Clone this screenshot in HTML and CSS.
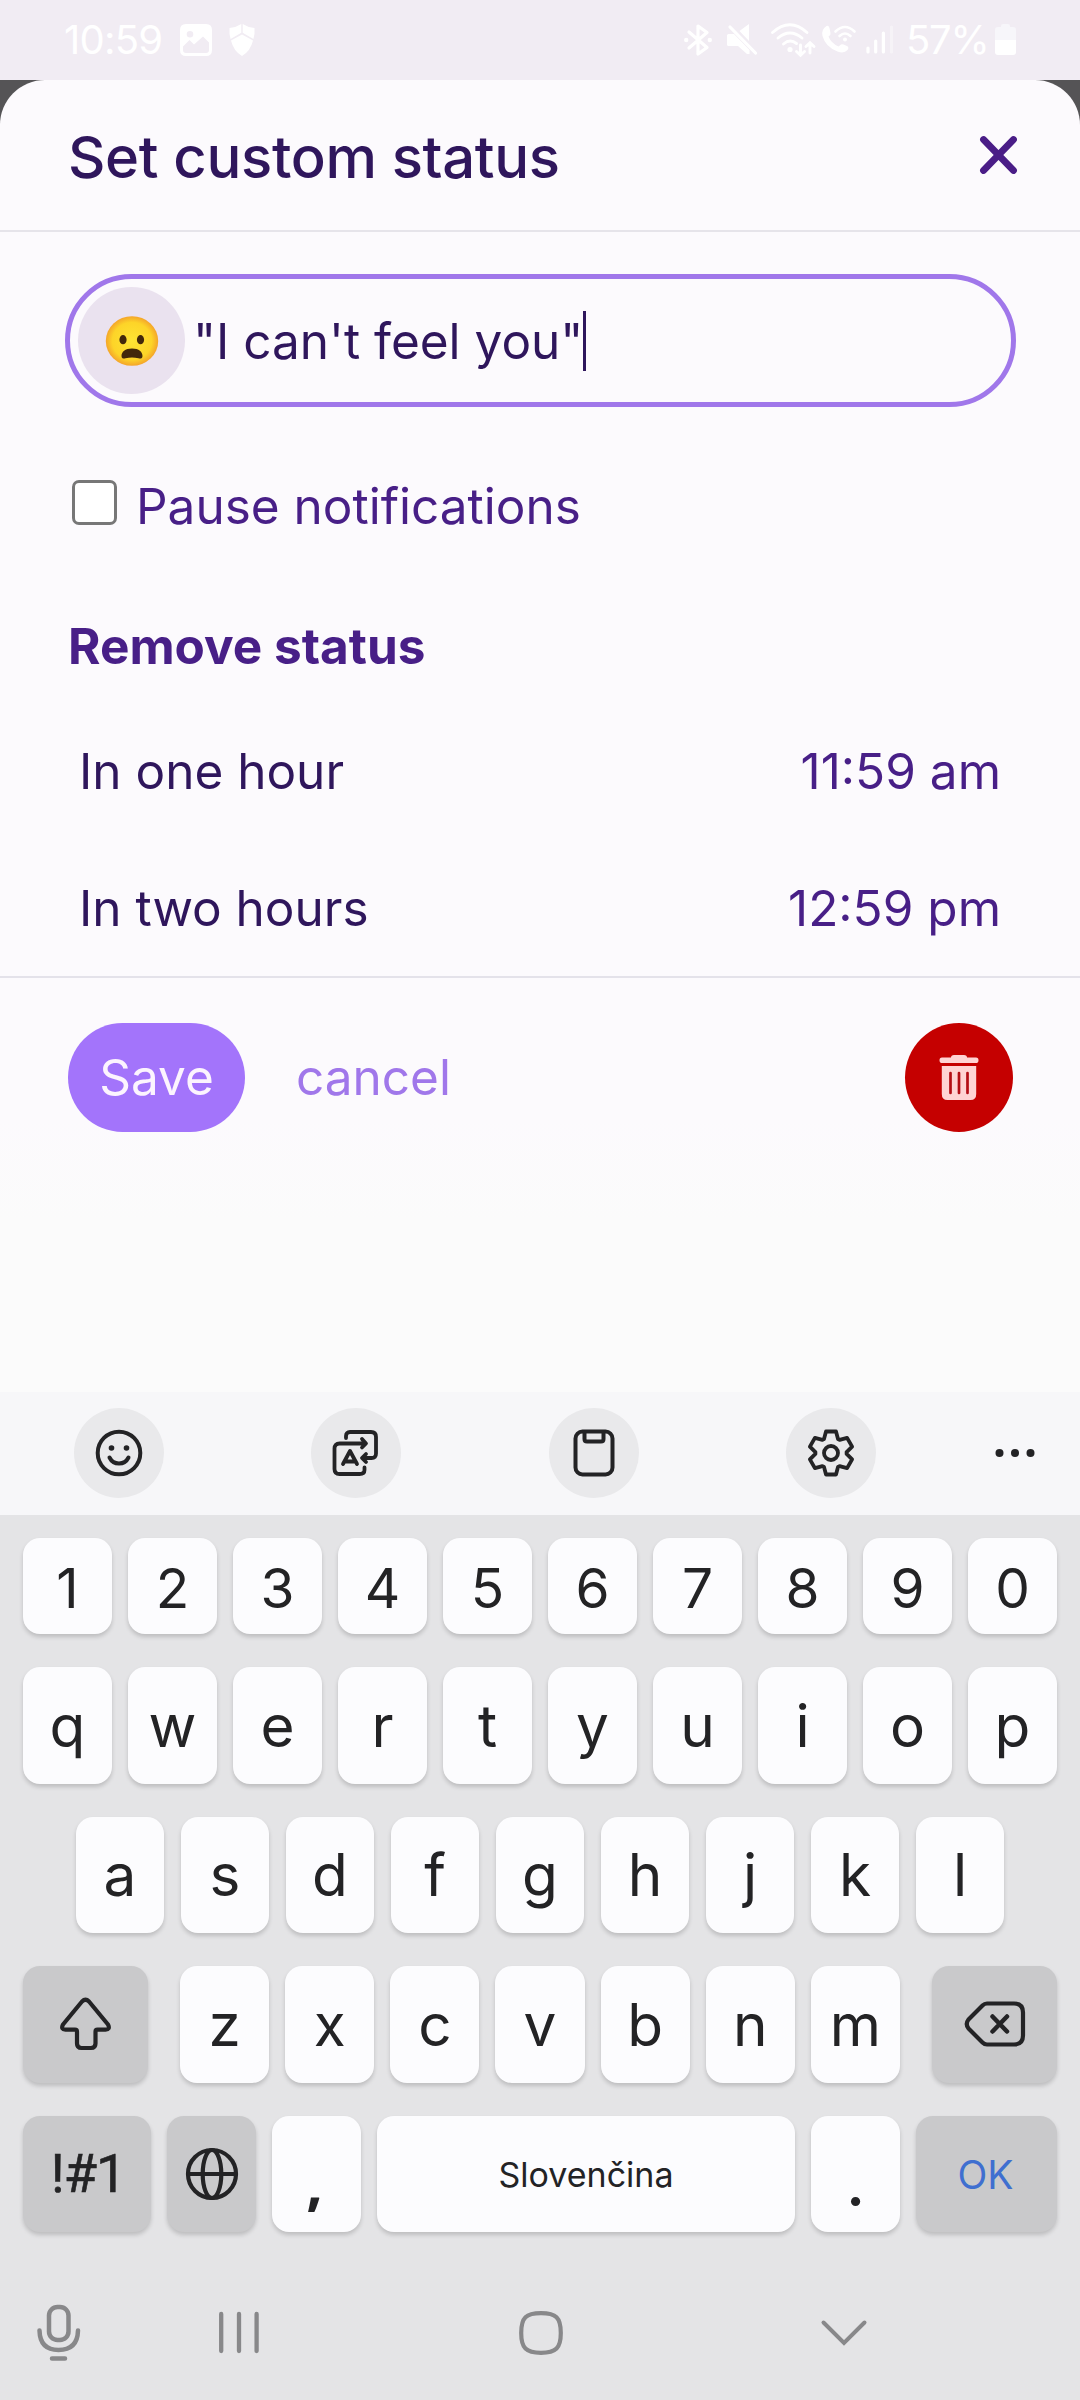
FILE: index.html
```html
<!DOCTYPE html>
<html lang="en">
<head>
<meta charset="utf-8">
<title>Set custom status</title>
<link rel="stylesheet" href="styles.css">
</head>
<body>
<header class="statusbar">
  <span class="clock">10:59</span>
  <svg class="st-photo" width="32" height="32" viewBox="0 0 32 32"><path fill="#fff" fill-rule="evenodd" d="M6 0H26Q32 0 32 6V26Q32 32 26 32H6Q0 32 0 26V6Q0 0 6 0ZM10 7a3.3 3.3 0 1 0 0 6.6a3.3 3.3 0 0 0 0-6.6ZM3 22.5L9.5 16L14 20.5L23 12.5L29 18.5V26Q29 29 26 29H6Q3 29 3 26Z"/></svg>
  <svg class="st-shield" width="26" height="32" viewBox="0 0 26 32"><path fill="#fff" d="M12.300 0V8.700L1.600 15Q0 10 .5 4Q7 3.500 12.300 0ZM13.700 0Q19 3.500 25.500 4Q26 10 24.400 15L13.700 8.700ZM13 10.500L24 16.500Q21.500 27 13 32Q4.500 27 2 16.500Z"/></svg>
  <span class="grow"></span>
  <svg class="st-bt" width="28" height="32" viewBox="0 0 28 32"><g fill="none" stroke="#fff" stroke-width="3.200" stroke-linejoin="round" stroke-linecap="round"><path d="M5 8L23 23.500L14 30V2L23 8.500L5 24"/></g><circle cx="2.200" cy="16" r="2.200" fill="#fff"/><circle cx="25.800" cy="16" r="2.200" fill="#fff"/></svg>
  <svg class="st-mute" width="30" height="32" viewBox="0 0 30 32"><path fill="#fff" d="M0 11.500Q0 10 1.500 10H7L22.500 26V30L20 30L11 22H1.500Q0 22 0 20.500ZM12.500 7L22 0V17Z"/><path d="M3 3L28.500 29" stroke="#fff" stroke-width="3.200" stroke-linecap="round"/></svg>
  <svg class="st-wifi" width="44" height="34" viewBox="0 0 44 34"><g fill="none" stroke="#fff" stroke-width="2.900" stroke-linecap="round"><path d="M1.500 9.500Q19 -6 36 9.500M7 15Q19 5 31 15M12.500 21Q19 15.500 25.500 20.500"/><path d="M29.500 22V32M25.500 28.500L29.500 32.300L33.500 28.500M39 30V20M35 23.500L39 19.700L43 23.500"/></g><circle cx="19" cy="26.500" r="2.600" fill="#fff"/></svg>
  <svg class="st-call" width="34" height="30" viewBox="0 0 34 30"><path fill="#fff" d="M4.500 1Q6.500 0 7.500 3L8.500 8Q9 10 6.500 11.500Q9 18 16.500 21.500L19 19.500Q20 19 21.500 19.500L25 21Q27.500 22.500 25.500 25Q22 29 15.500 26.500Q3.500 22 .5 11Q-1 4.500 4.500 1Z"/><g fill="none" stroke="#fff" stroke-width="2.600" stroke-linecap="round"><path d="M13.500 6.500Q23 -2.500 32.500 6.500M17.500 11Q23 6 28.500 11"/></g><circle cx="23" cy="14.500" r="2" fill="#fff"/></svg>
  <svg class="st-signal" width="28" height="30" viewBox="0 0 28 30"><g stroke-width="3.200" stroke-linecap="round" stroke="#fff"><path d="M2 23V27M9.700 16V27M17.400 8V27"/><path d="M25.500 2V27" opacity=".4"/></g></svg>
  <span class="pct">57%</span>
  <svg class="st-bat" width="21" height="32" viewBox="0 0 21 32"><path fill="#f7f6fa" d="M6 2Q6 0 8 0H13Q15 0 15 2V3H18Q21 3 21 6V16H0V6Q0 3 3 3H6Z"/><path fill="#fff" d="M0 16H21V28Q21 31 18 31H3Q0 31 0 28Z"/></svg>
</header>
<div class="backdrop">
<main class="sheet">
  <div class="sheet-head">
    <h1 class="title">Set custom status</h1>
    <svg class="close" width="37" height="38" viewBox="0 0 37 38"><path d="M3.600 3.600L33.400 34.400M33.400 3.600L3.600 34.400" stroke="#4a1d87" stroke-width="7" stroke-linecap="round"/></svg>
  </div>
  <div class="sheet-body">
    <div class="field">
      <span class="emoji-btn"><svg width="54" height="52" viewBox="-27 -26 54 52"><defs><radialGradient id="face"><stop offset="0" stop-color="#fee434"/><stop offset=".75" stop-color="#fdd428"/><stop offset="1" stop-color="#f4a52a"/></radialGradient></defs><ellipse rx="26.200" ry="24.800" fill="url(#face)"/><ellipse cx="-9" cy="-1.300" rx="3.600" ry="4.600" fill="#42280b"/><ellipse cx="8.500" cy="-1.300" rx="3.600" ry="4.600" fill="#42280b"/><path d="M0 7.500C7 7.500 10.500 11 10.500 15C10.500 17.500 8.500 18 6.500 17.300Q0 15.800-6.500 17.300C-8.500 18-10.500 17.500-10.500 15C-10.500 11-7 7.500 0 7.500Z" fill="#42280b"/></svg></span>
      <span class="field-text">"I can't feel you"</span><span class="caret"></span>
    </div>
    <label class="pause"><span class="box"></span><span class="pause-text">Pause notifications</span></label>
    <h2 class="subtitle">Remove status</h2>
    <div class="option"><span>In one hour</span><span class="time">11:59 am</span></div>
    <div class="option"><span>In two hours</span><span class="time">12:59 pm</span></div>
  </div>
  <div class="actions">
    <span class="save">Save</span>
    <span class="cancel">cancel</span>
    <span class="trash"><svg width="40" height="45" viewBox="0 0 40 45"><path fill="#ffd3d3" d="M12 2.500Q12 0 15 0H25Q28 0 28 2.500H37Q39.500 2.500 39.500 5.200Q39.500 8 37 8H3Q.5 8 .5 5.200Q.5 2.500 3 2.500Z"/><path fill="#ffd3d3" d="M2.800 11H37.200V39Q37.200 45 31.500 45H8.500Q2.800 45 2.800 39Z"/><path d="M11.500 18V38M20 18V38M28.500 18V38" stroke="#b40d14" stroke-width="2.700" stroke-linecap="round"/></svg></span>
  </div>
</main>
</div>
<section class="keyboard">
  <div class="tools">
    <span class="tool"><svg width="48" height="48" viewBox="-24 -24 48 48" fill="none" stroke="#232325" stroke-width="4" stroke-linecap="round"><circle r="21.300"/><path d="M-9.500 4.500Q-6.500 10.500 0 10.500Q6.500 10.500 9.500 4.500"/><g fill="#232325" stroke="none"><circle cx="-7.500" cy="-5" r="2.800"/><circle cx="7.500" cy="-5" r="2.800"/></g></svg></span>
    <span class="tool"><svg width="48" height="48" viewBox="0.500 0 48 48" fill="none" stroke="#232325" stroke-width="3.800" stroke-linecap="round" stroke-linejoin="round"><path d="M14.500 9V7Q14.500 3 18.500 3H39.500Q44.500 3 44.500 8V24.500Q44.500 29 40 29H31M34.500 25L30.500 29L34.500 33"/><path d="M30.500 10L34.500 14.500L30.500 18.500M34 14.500H8Q3 14.500 3 19.500V40Q3 45 8 45H28Q33 45 33 41V38.500"/><path d="M11.500 35L18.500 22L25.500 35M14 32.500H23"/></svg></span>
    <span class="tool"><svg width="48" height="48" viewBox="-1.500 0 48 48" fill="none" stroke="#232325" stroke-width="4" stroke-linejoin="round"><rect x="4" y="2.500" width="37" height="43" rx="7"/><path d="M13 3V10Q13 12.500 15.500 12.500H29.500Q32 12.500 32 10V3"/></svg></span>
    <span class="tool"><svg width="48" height="48" viewBox="-24 -24 48 48" fill="none" stroke="#232325" stroke-width="3.800" stroke-linejoin="round"><path d="M-7-14L-5-21.500H5L7-14L8.600-13.100L16.100-15.100L21.100-6.400L15.600-.9V.9L21.100 6.400L16.100 15.100L8.600 13.100L7 14L5 21.500H-5L-7 14L-8.600 13.100L-16.100 15.100L-21.100 6.400L-15.600 .9V-.9L-21.100-6.400L-16.100-15.100L-8.600-13.100Z"/><circle r="7"/></svg></span>
    <svg class="more" width="40" height="10" viewBox="0 0 40 10" fill="#232325"><circle cx="4.500" cy="5" r="4"/><circle cx="20" cy="5" r="4"/><circle cx="35.500" cy="5" r="4"/></svg>
  </div>
  <div class="keys">
    <div class="row digits"><b>1</b><b>2</b><b>3</b><b>4</b><b>5</b><b>6</b><b>7</b><b>8</b><b>9</b><b>0</b></div>
    <div class="row"><b>q</b><b>w</b><b>e</b><b>r</b><b>t</b><b>y</b><b>u</b><b>i</b><b>o</b><b>p</b></div>
    <div class="row home"><b>a</b><b>s</b><b>d</b><b>f</b><b>g</b><b>h</b><b>j</b><b>k</b><b>l</b></div>
    <div class="row shift-row">
      <b class="fn wide"><svg width="52" height="54" viewBox="0.500 -0.500 52 54" fill="none" stroke="#232325" stroke-width="4.200" stroke-linejoin="round"><path d="M22.500 4Q26 .5 29.500 4L48.500 27Q51 32 46 32.200H38Q36 32.200 36 34.200V46Q36 50.500 31.500 50.500H22Q17.500 50.500 17.500 46V34.200Q17.500 32.200 15.500 32.200H6Q1 32 3.500 27Z"/></svg></b>
      <span class="mid"><b>z</b><b>x</b><b>c</b><b>v</b><b>b</b><b>n</b><b>m</b></span>
      <b class="fn wide"><svg width="62" height="48" viewBox="0 -0.500 62 48" fill="none" stroke="#232325" stroke-width="4.200" stroke-linejoin="round" stroke-linecap="round"><path d="M23 3H50Q59 3 59 12V35Q59 44 50 44H23Q20.500 44 18.500 42L4.500 28Q1 23.500 4.500 19L18.500 5Q20.500 3 23 3Z"/><path stroke-width="4.500" d="M28.500 16L43 31M43 16L28.500 31"/></svg></b>
    </div>
    <div class="row bottom">
      <b class="fn sym">!#1</b>
      <b class="fn"><svg width="54" height="54" viewBox="-27 -27 54 54" fill="none" stroke="#232325" stroke-width="4.200"><circle r="24"/><ellipse rx="9.300" ry="24"/><path d="M-24 0H24"/></svg></b>
      <b class="punct comma">,</b>
      <b class="space">Slovenčina</b>
      <b class="punct">.</b>
      <b class="fn ok">OK</b>
    </div>
  </div>
  <nav class="navbar">
    <svg class="n-mic" width="44" height="58" viewBox="0 0 44 58" fill="none" stroke="#88888a" stroke-width="4.500" stroke-linecap="round"><rect x="12" y="3" width="19.500" height="33" rx="8.500"/><path d="M2.500 26.500Q3 46 21.500 46Q40.500 46 41 26.500M15 54.500H28"/></svg>
    <svg class="n-recent" width="40" height="44" viewBox="0 0 40 44" stroke="#88888a" stroke-width="4.300" stroke-linecap="round"><path d="M2.200 3V40M20 3V40M37.600 3V40"/></svg>
    <svg class="n-home" width="44" height="44" viewBox="0 0 44 44" fill="none" stroke="#88888a" stroke-width="4.200"><path d="M22 2.200C37 2.200 41.800 6.500 41.800 22C41.800 37 37 41.800 22 41.800C7 41.800 2.200 37 2.200 22C2.200 6.500 7 2.200 22 2.200Z"/></svg>
    <svg class="n-down" width="46" height="26" viewBox="0 0 46 26" fill="none" stroke="#88888a" stroke-width="4" stroke-linecap="round"><path d="M2.500 2.500L23 23L43.500 2.500"/></svg>
  </nav>
</section>
</body>
</html>
```
FILE: styles.css
```css
* { box-sizing: border-box; }
body {
  margin: 0;
  width: 1080px;
  height: 2400px;
  display: flex;
  flex-direction: column;
  overflow: hidden;
  font-family: Inter, "Noto Sans", sans-serif;
  color: #2f165c;
}
svg { display: block; flex: none; overflow: visible; }
.grow { flex: 1; }

.statusbar {
  height: 80px;
  padding: 0 64px;
  display: flex;
  align-items: center;
  background: #f1ecf3;
  color: #fff;
  font-size: 40px;
  line-height: 80px;
}
.clock { width: 116px; letter-spacing: -0.8px; white-space: nowrap; }
.st-shield { margin-left: 17px; }
.st-mute { margin-left: 15px; }
.st-wifi { margin-left: 14px; }
.st-call { margin-left: 7px; }
.st-signal { margin-left: 10px; }
.pct { margin-left: 12px; width: 89px; letter-spacing: -1.2px; white-space: nowrap; }

.backdrop { background: #555456; }
.sheet {
  height: 1312px;
  border-radius: 45px 45px 0 0;
  background: linear-gradient(#fcfafd 0, #fcfafd 1040px, #fbfbfb 1140px);
}
.sheet-head {
  height: 152px;
  padding: 0 63px 0 68px;
  display: flex;
  align-items: center;
  justify-content: space-between;
  border-bottom: 2px solid #e6e4ea;
}
.title {
  margin: 3px 0 0;
  font-size: 58px;
  font-weight: 550;
  line-height: 80px;
  letter-spacing: -0.35px;
  white-space: nowrap;
}
.close { margin-bottom: 1px; }
.sheet-body {
  height: 746px;
  padding: 42px 64px 0 65px;
  border-bottom: 2px solid #e4e2ea;
}
.field {
  height: 133px;
  padding-left: 8px;
  display: flex;
  align-items: center;
  border: 5px solid #a077ea;
  border-radius: 67px;
  font-size: 49.500px;
}
.emoji-btn {
  width: 107px;
  height: 107px;
  display: grid;
  place-items: center;
  border-radius: 50%;
  background: #eae2ef;
}
.field-text { margin-left: 8px; white-space: nowrap; }
.caret { width: 3px; height: 60px; background: #2f165c; }
.pause {
  margin-top: 68px;
  padding-left: 7px;
  height: 62px;
  display: flex;
  align-items: center;
  color: #481f87;
  font-size: 49.500px;
}
.box {
  width: 45px;
  height: 45px;
  margin-bottom: 8px;
  border: 3px solid #777;
  border-radius: 7px;
  background: #fff;
}
.pause-text { margin-left: 19px; white-space: nowrap; }
.subtitle {
  margin: 79px 0 0 3px;
  height: 60px;
  line-height: 60px;
  font-size: 49.500px;
  font-weight: 700;
  color: #481f87;
}
.option {
  height: 137px;
  padding: 0 15px 0 14px;
  display: flex;
  align-items: center;
  justify-content: space-between;
  font-size: 49.500px;
  white-space: nowrap;
}
.subtitle + .option { margin-top: 26px; }
.time { color: #481f87; }
.actions {
  padding: 45px 67px 0 68px;
  display: flex;
  align-items: center;
  font-size: 49.500px;
  color: #a077ea;
}
.save {
  width: 177px;
  height: 109px;
  padding-bottom: 2px;
  display: grid;
  place-items: center;
  border-radius: 55px;
  background: #a374fb;
  color: #fcf4fe;
}
.cancel { margin-left: 51px; padding-bottom: 2px; }
.trash {
  width: 108px;
  height: 109px;
  margin-left: auto;
  display: grid;
  place-items: center;
  border-radius: 50%;
  background: #c50000;
}

.keyboard { flex: 1; background: #e4e4e6; color: #232325; }
.tools {
  height: 123px;
  padding: 0 0 2px 74px;
  display: flex;
  align-items: center;
  gap: 147.300px;
  background: #f7f7f9;
}
.tool {
  width: 90px;
  height: 90px;
  display: grid;
  place-items: center;
  border-radius: 50%;
  background: #e9e9eb;
}
.more { margin-left: -28px; }
.keys {
  padding: 23px 23px 0;
  display: flex;
  flex-direction: column;
  gap: 33px;
}
.row { display: flex; gap: 16px; height: 116.500px; }
.row b {
  flex: 1;
  display: flex;
  align-items: center;
  justify-content: center;
  border-radius: 17px;
  background: #fcfcfe;
  box-shadow: 0 3px 4px rgba(0, 0, 0, .17);
  font-size: 58.500px;
  font-weight: 400;
}
.row.digits { height: 96px; }
.row.digits b { font-size: 55px; padding-top: 4px; }
.row.home { padding: 0 53px; gap: 17px; }
.shift-row { justify-content: space-between; }
.row b.fn { background: #c9c9cb; }
.row .wide { flex: none; width: 125px; }
.mid { width: 720px; display: flex; gap: 16px; }
.row.bottom b { flex: none; width: 89px; }
.row.bottom .sym {
  width: 128px;
  padding-left: 2px;
  font-family: Roboto, sans-serif;
  font-size: 54px;
  font-weight: 400;
  letter-spacing: -1px;
  -webkit-text-stroke: 0.6px #232325;
}
.row.bottom .punct { padding-top: 20px; font-weight: 600; }
.row.bottom .comma { font-family: "Noto Sans", sans-serif; font-weight: 700; padding: 15px 4px 0 0; }
.row.bottom .space { flex: 1; font-size: 34px; padding-top: 1px; }
.row.bottom .ok { width: 141px; font-size: 39px; color: #3f6fd0; padding: 2px 2px 0 0; }
.navbar {
  height: 168px;
  padding: 33px 0 0 37px;
  display: flex;
  align-items: center;
}
.n-recent { margin-left: 138px; }
.n-home { margin-left: 260px; }
.n-down { margin-left: 258px; }
```
